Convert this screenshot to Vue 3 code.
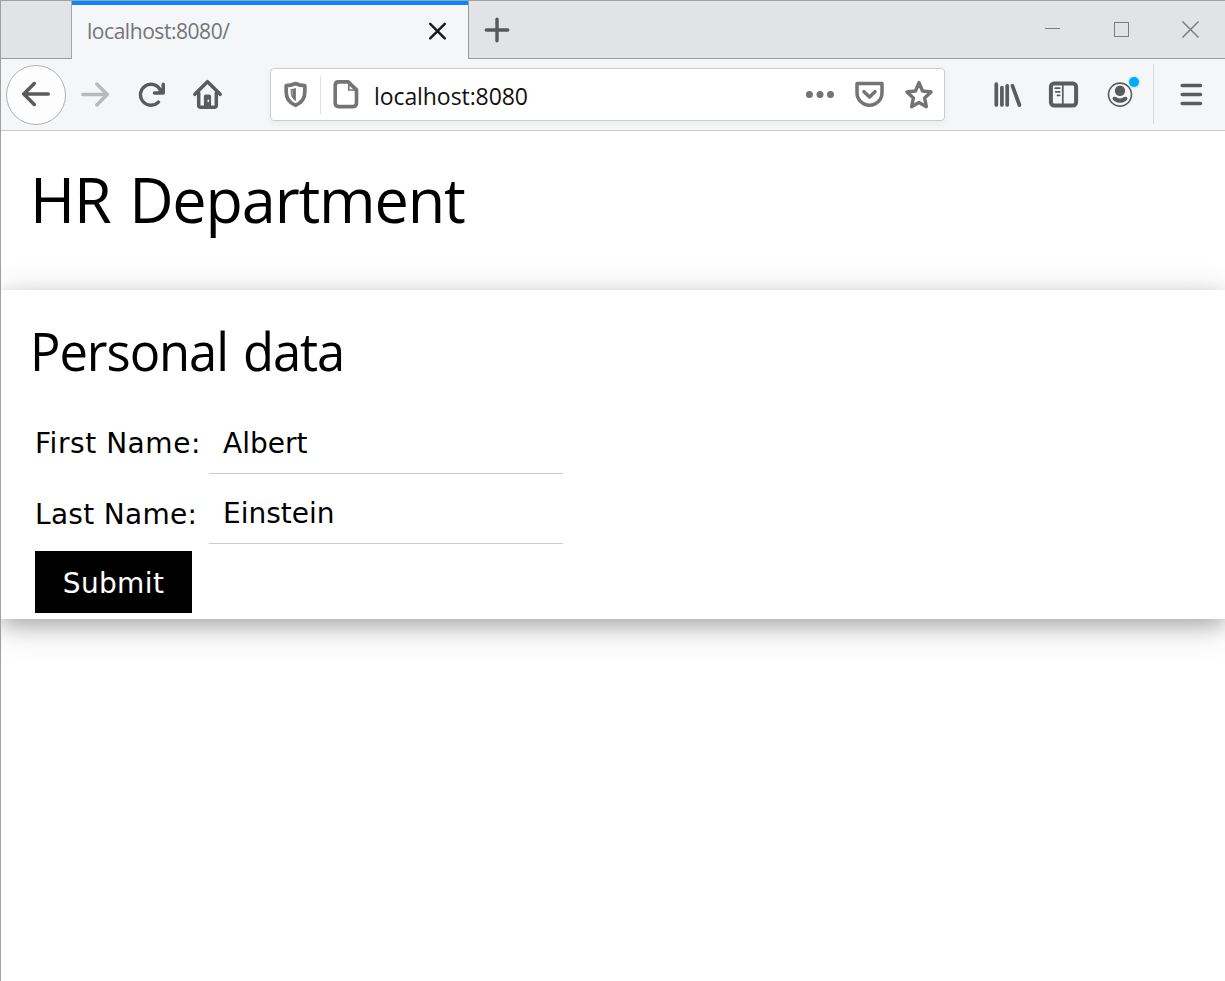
<script setup>
import { ref } from 'vue'

const firstName = ref('Albert')
const lastName = ref('Einstein')
</script>

<template>
  <div class="window">
    <header class="tabstrip">
      <div class="lead"></div>
      <div class="tab">
        <span class="tab-title">localhost:8080/</span>
        <svg class="tab-close" width="20" height="20" viewBox="427 21 20 20">
          <path d="M430.2 23.8l14.6 14.6M444.8 23.8l-14.6 14.6" fill="none" stroke="#18191a" stroke-width="2.4" stroke-linecap="round" />
        </svg>
      </div>
      <div class="rest">
        <svg class="plus" width="28" height="28" viewBox="483 16 28 28">
          <path d="M486.3 30h21.4M497 19.3v21.4" fill="none" stroke="#58595b" stroke-width="3.4" stroke-linecap="round" />
        </svg>
        <svg class="controls" width="170" height="24" viewBox="1040 18 170 24">
          <g fill="none" stroke="#7b7c7f">
            <path d="M1045 28.5h15" />
            <rect x="1114.500" y="22.500" width="14" height="14" />
            <path d="M1182.500 21.500l16 16M1198.500 21.500l-16 16" stroke-width="1.500" />
          </g>
        </svg>
      </div>
    </header>

    <nav class="toolbar">
      <div class="back">
        <svg width="28" height="28" viewBox="0 0 16 16"><path fill="#5a5b5d" d="M15 7H3.414l4.293-4.293a1 1 0 0 0-1.414-1.414l-6 6a1 1 0 0 0 0 1.414l6 6a1 1 0 0 0 1.414-1.414L3.414 9H15a1 1 0 0 0 0-2z" /></svg>
      </div>
      <svg class="ico forward" viewBox="79 79 32 32"><path fill="#b8b9ba" transform="translate(109 80.500) scale(-1.75 1.75)" d="M15 7H3.414l4.293-4.293a1 1 0 0 0-1.414-1.414l-6 6a1 1 0 0 0 0 1.414l6 6a1 1 0 0 0 1.414-1.414L3.414 9H15a1 1 0 0 0 0-2z" /></svg>
      <svg class="ico reload" viewBox="136 79 32 32">
        <g transform="translate(137 80.700) scale(1.75)" fill="#5a5b5d">
          <path d="M15 1a1 1 0 0 0-1 1v2.418A6.995 6.995 0 1 0 8 15a6.954 6.954 0 0 0 4.950-2.050 1 1 0 0 0-1.414-1.414A5.019 5.019 0 1 1 12.549 6H10a1 1 0 0 0 0 2h5a1 1 0 0 0 1-1V2a1 1 0 0 0-1-1z" />
          <path d="M14.200 4L12 6.300h2.400z" />
        </g>
      </svg>
      <svg class="ico home" viewBox="192 79 32 32">
        <g fill="none" stroke="#5a5b5d" stroke-width="3.500" stroke-linecap="round" stroke-linejoin="round">
          <path d="M194.800 94.300L207.500 81.700L220.200 94.300" />
          <path d="M198.700 93v12.300q0 2 2 2h13.600q2 0 2-2V93" />
        </g>
        <path fill="#5a5b5d" d="M203.900 107V96.500q0-2 2-2h3.200q2 0 2 2V107z" />
        <rect x="207.500" y="99.500" width="1.600" height="2.600" fill="#e4e5e6" />
      </svg>

      <div class="urlbar">
        <svg class="ico shield" viewBox="279 79 32 32">
          <path d="M295.500 83.500q-4.700 2-9.300 2.200v6.500c0 6.200 3.600 10.700 9.300 13.100c5.700-2.400 9.300-6.900 9.300-13.100v-6.500q-4.600-.2-9.300-2.200z" fill="none" stroke="#737476" stroke-width="3.700" stroke-linejoin="round" />
          <path d="M295.900 88v13.300c-3.300-1.900-5.200-4.800-5.200-8.700v-3.400q2.700-.2 5.200-1.200z" fill="#737476" />
          <path d="M292.300 90.300v5.200" stroke="#a5a6a7" stroke-width="1.300" />
        </svg>
        <span class="split"></span>
        <svg class="ico page" viewBox="330 79 32 32">
          <path d="M338.700 81.900h9.500l8.300 8v13.200q0 3.500-3.500 3.500h-14.300q-3.500 0-3.500-3.500V85.400q0-3.500 3.500-3.500z" fill="none" stroke="#737476" stroke-width="3.600" stroke-linejoin="round" />
          <path d="M348.800 82.500v7.500h8" fill="none" stroke="#737476" stroke-width="1.700" />
        </svg>
        <span class="address">localhost:8080</span>
        <svg class="ico dots" viewBox="804 79 32 32" fill="#737476"><circle cx="809.400" cy="94.600" r="3.500" /><circle cx="820" cy="94.600" r="3.500" /><circle cx="830.500" cy="94.600" r="3.500" /></svg>
        <svg class="ico pocket" viewBox="854 79 32 32">
          <g fill="none" stroke="#737476" stroke-width="3.500" stroke-linecap="round" stroke-linejoin="round">
            <path d="M857 83.500h25v9.200a12.500 12.500 0 0 1-25 0z" />
            <path d="M864 91.700l5.500 5.200l5.500-5.200" />
          </g>
        </svg>
        <svg class="ico star" viewBox="903 79 32 32">
          <path d="M919 82.600l3.500 8.400l8.600.9l-6.500 6l1.800 8.800l-7.400-4.200l-7.400 4.200l1.800-8.800l-6.500-6l8.600-.9z" fill="none" stroke="#737476" stroke-width="3.400" stroke-linejoin="round" />
        </svg>
      </div>

      <svg class="ico library" viewBox="992 79 32 32">
        <path d="M996.300 84.200v20.800M1001.900 87.600v17.400M1007.200 85.800v19.200M1012.500 85.800l6.900 19.200" fill="none" stroke="#5a5b5d" stroke-width="3.700" stroke-linecap="round" />
      </svg>
      <svg class="ico sidebar" viewBox="1048 79 32 32">
        <rect x="1050.900" y="83.600" width="25.200" height="21.900" rx="3.200" fill="none" stroke="#5a5b5d" stroke-width="4" />
        <path d="M1062.800 83v22M1055.200 88.200h4.500M1055.700 91.800h4M1057.500 95.400h2.200" fill="none" stroke="#5a5b5d" stroke-width="1.700" stroke-linecap="round" />
      </svg>
      <svg class="account" width="40" height="40" viewBox="1104 75 40 40">
        <circle cx="1120" cy="94.600" r="11.500" fill="none" stroke="#5a5b5d" stroke-width="1.600" />
        <circle cx="1120" cy="90.800" r="5.200" fill="#5a5b5d" />
        <path d="M1114.200 96.800q2 0 3 .9q2.800 1.500 5.600 0q1-.9 3-.9q1.700 0 1.700 1.700c-.6 2.500-3.800 4.300-7.500 4.300s-6.900-1.800-7.500-4.300q0-1.700 1.700-1.700z" fill="#5a5b5d" />
        <circle cx="1134" cy="82" r="6.200" fill="#c5eafc" />
        <circle cx="1134" cy="82" r="5" fill="#00adf5" />
      </svg>
      <span class="divider"></span>
      <svg class="ico menu" viewBox="1175 79 32 32">
        <path d="M1182.200 85.600h18.300M1182.200 94.500h18.300M1182.200 103.500h18.300" fill="none" stroke="#5a5b5d" stroke-width="3.500" stroke-linecap="round" />
      </svg>
    </nav>

    <main class="page-body">
      <h1><span>HR Department</span></h1>
      <section class="card">
        <h2><span>Personal data</span></h2>
        <form @submit.prevent>
          <div class="row">
            <label for="first">First Name:</label>
            <input id="first" v-model="firstName" type="text" />
          </div>
          <div class="row second">
            <label for="last">Last Name:</label>
            <input id="last" v-model="lastName" type="text" />
          </div>
          <button type="submit">Submit</button>
        </form>
      </section>
    </main>
  </div>
</template>

<style>
body { margin: 0; background: #fff; }
</style>

<style scoped>
* { box-sizing: border-box; }
svg { display: block; flex: none; }
.window {
  width: 1225px;
  height: 981px;
  overflow: hidden;
  border-left: 1px solid #a0a0a1;
  border-top: 1px solid #a0a0a1;
  background: #fff;
  font-family: "Open Sans", "Noto Sans", sans-serif;
}
.tabstrip { display: flex; height: 58px; }
.lead { width: 71px; background: #e2e3e5; border-right: 1px solid #a6a7a9; border-bottom: 1px solid #98999c; }
.tab {
  display: flex;
  align-items: center;
  width: 396px;
  padding: 0 21px 2px 15px;
  border-top: 4px solid #0a84ff;
  background: #f5f6f8;
}
.tab-title { font-size: 21px; line-height: 30px; letter-spacing: -0.45px; color: #747577; }
.tab-close { margin-left: auto; }
.rest {
  display: flex;
  flex: 1;
  align-items: center;
  padding: 0 15px 0 14px;
  background: #e2e3e5;
  border-left: 1px solid #98999c;
  border-bottom: 1px solid #98999c;
}
.controls { margin-left: auto; }
.toolbar {
  display: flex;
  align-items: center;
  height: 72px;
  padding-left: 5px;
  background: #f5f6f8;
  border-bottom: 1px solid #c9cacc;
}
.ico { width: 32px; height: 32px; }
.back {
  display: flex;
  flex: none;
  align-items: center;
  justify-content: center;
  width: 60px;
  height: 60px;
  padding-bottom: 1px;
  border: 1px solid #b0b1b3;
  border-radius: 50%;
  background: #fdfdfd;
}
.forward { margin-left: 13px; }
.reload { margin-left: 25px; }
.home { margin-left: 24px; }
.urlbar {
  display: flex;
  flex: none;
  align-items: center;
  width: 675px;
  height: 53px;
  margin-left: 46px;
  padding: 0 9px 0 8px;
  border: 1px solid #cbcccd;
  border-radius: 4px;
  background: #fff;
  box-shadow: 0 2px 7px rgba(0, 0, 0, 0.05);
}
.split { width: 1px; height: 38px; margin-left: 9px; background: #dfe0e1; }
.page { margin-left: 9px; }
.address { margin-left: 12px; padding-top: 3px; font-size: 23px; line-height: 32px; letter-spacing: -0.08px; color: #111; }
.dots { margin-left: auto; }
.pocket { margin-left: 18px; }
.star { margin-left: 17px; }
.library { margin-left: 47px; }
.sidebar { margin-left: 24px; }
.account { margin-left: 24px; }
.divider { width: 1px; height: 60px; margin-left: 9px; margin-bottom: 1px; background: #d7d8da; }
.menu { margin-left: 21px; }

.page-body { color: #000; }
h1, h2 { margin: 0; font-weight: 400; white-space: nowrap; }
h1 span, h2 span { display: inline-block; transform-origin: 0 50%; }
h1 { height: 159px; padding: 23px 0 0 29px; font-size: 63px; line-height: 90px; letter-spacing: -1.2px; word-spacing: 4px; }
h1 span { transform: scaleX(0.971); }
.card {
  height: 329px;
  box-shadow: 0 7px 17.5px rgba(0, 0, 0, 0.2), 0 7px 35px rgba(0, 0, 0, 0.19);
}
h2 { height: 122px; padding: 21px 0 0 29px; font-size: 52.5px; line-height: 80px; letter-spacing: -1.1px; word-spacing: 3px; }
h2 span { transform: scaleX(0.966); }
form { padding-left: 34px; font-family: "DejaVu Sans", sans-serif; font-size: 28px; }
.row { display: flex; align-items: center; height: 62px; margin-bottom: 8px; }
.second { margin-bottom: 7px; }
label { width: 174px; letter-spacing: 0.55px; white-space: nowrap; }
.second label { padding-top: 2px; letter-spacing: 0.3px; }
input {
  width: 354px;
  height: 62px;
  padding: 2px 14px 0;
  border: 0;
  border-bottom: 1px solid #ccc;
  outline: 0;
  background: transparent;
  color: #000;
  font: inherit;
}
button {
  display: block;
  width: 157px;
  height: 62px;
  padding: 2px 0 0;
  border: 0;
  background: #000;
  color: #fff;
  font: inherit;
  letter-spacing: 0.35px;
}
</style>
